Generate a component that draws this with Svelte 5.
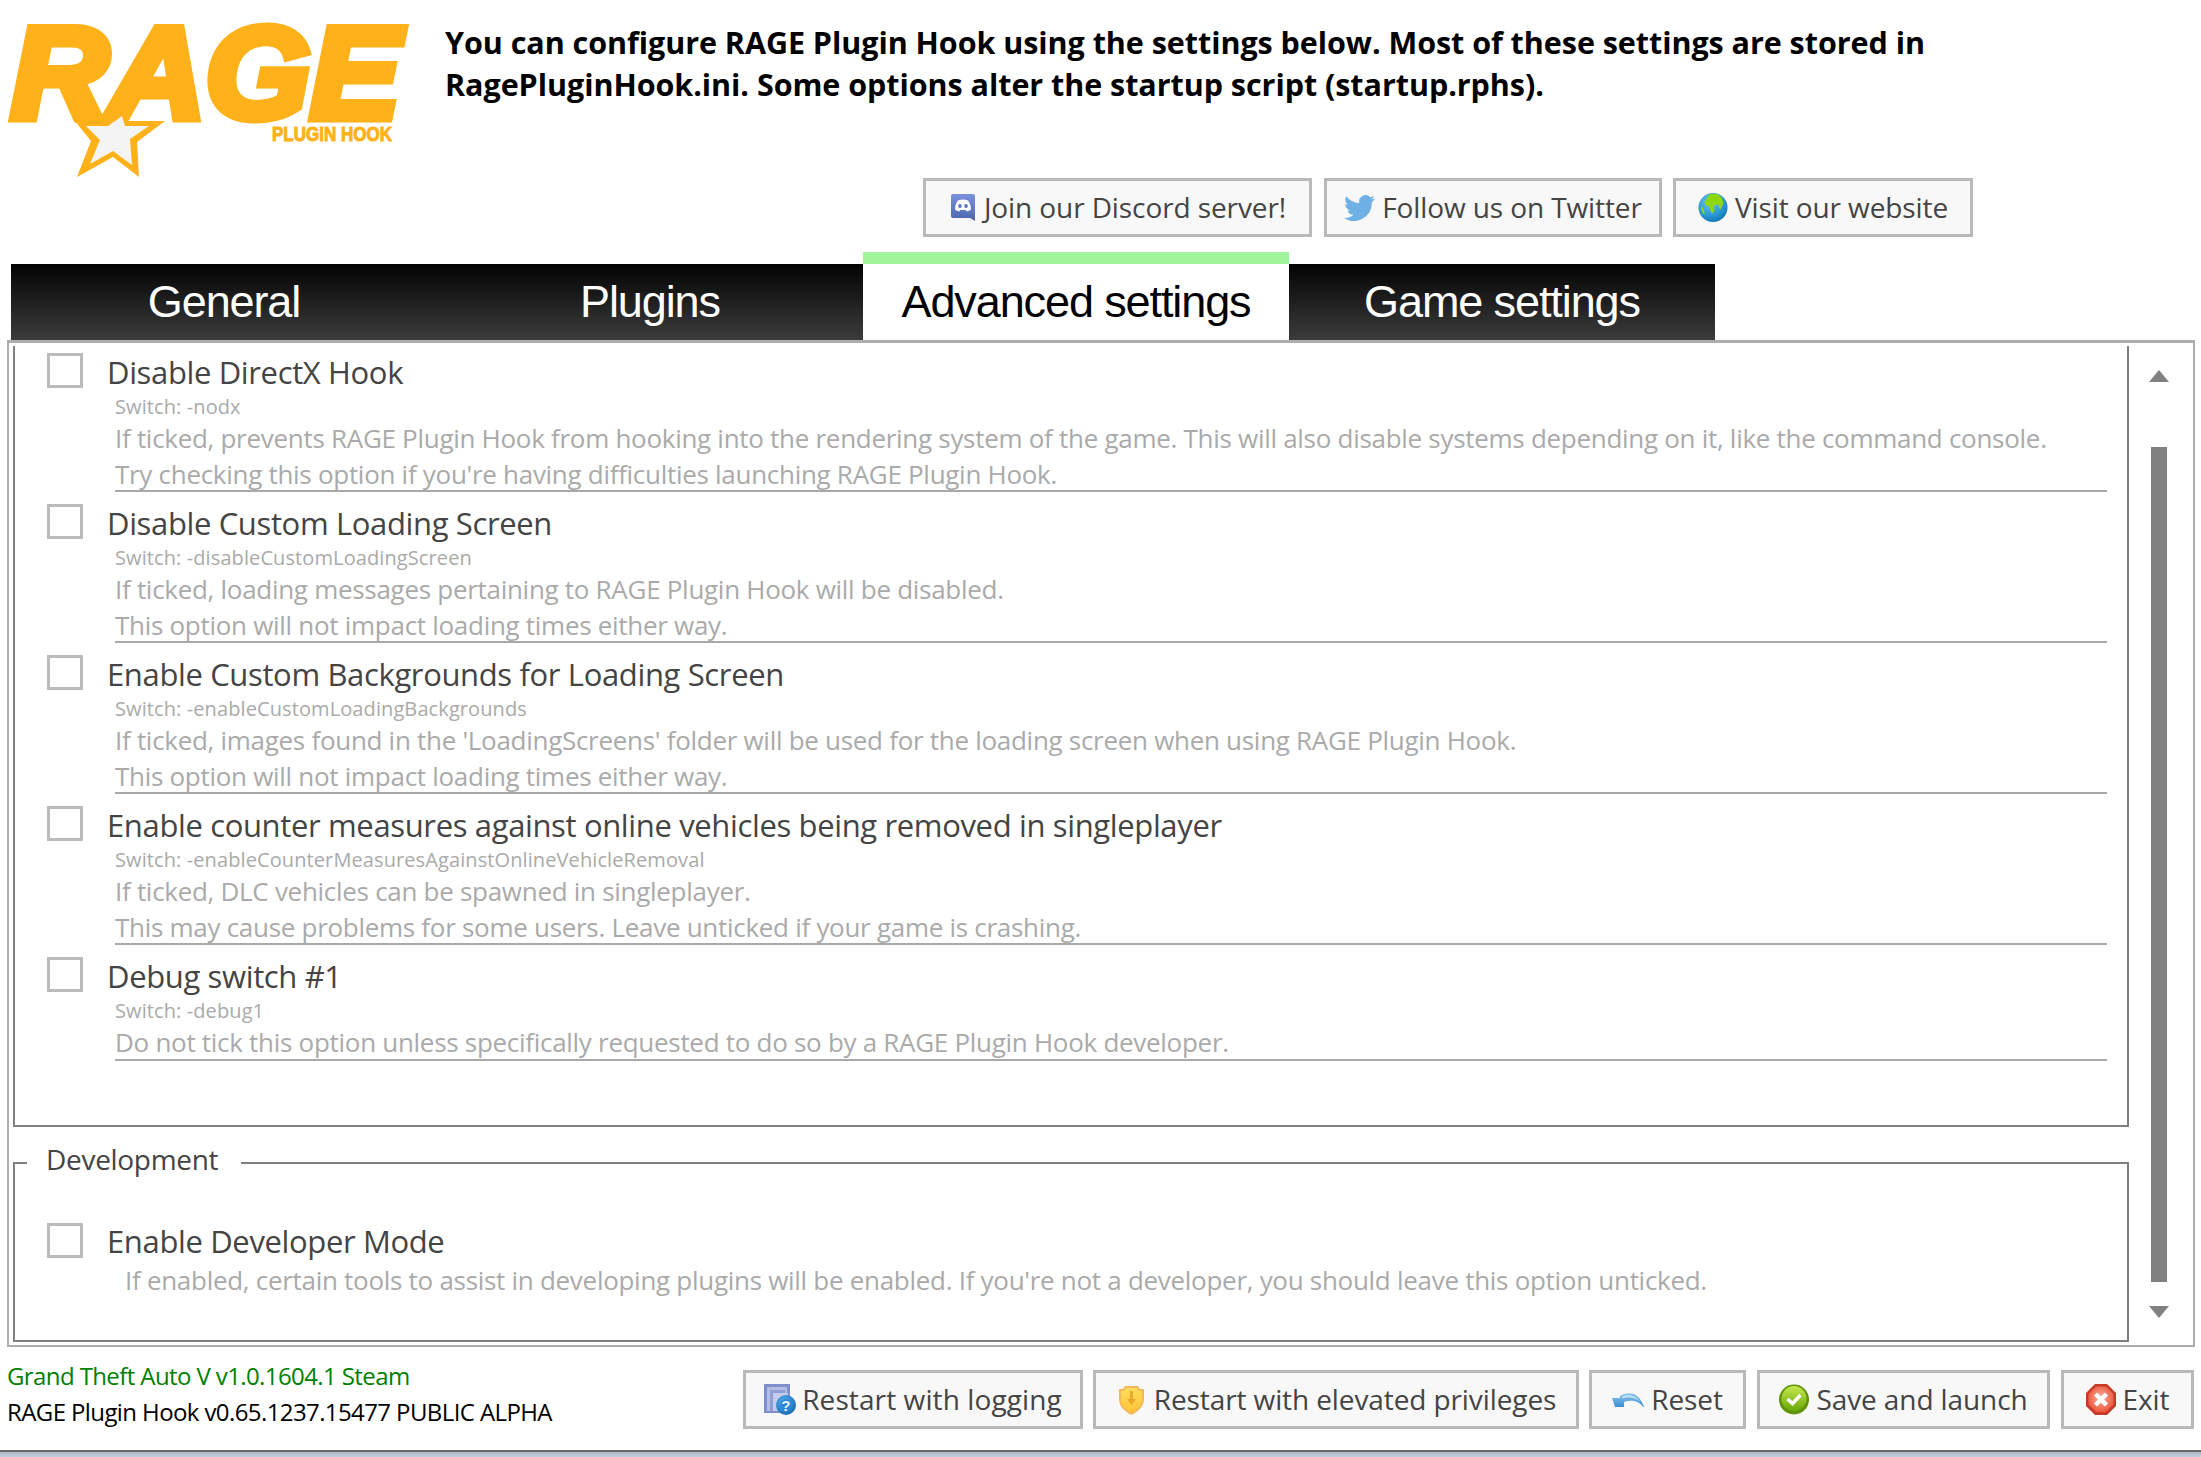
<script>
  const tabs = [
    { label: 'General' },
    { label: 'Plugins' },
    { label: 'Advanced settings', active: true },
    { label: 'Game settings' }
  ];

  const options = [
    {
      title: 'Disable DirectX Hook',
      sw: '-nodx',
      lines: [
        'If ticked, prevents RAGE Plugin Hook from hooking into the rendering system of the game. This will also disable systems depending on it, like the command console.',
        "Try checking this option if you're having difficulties launching RAGE Plugin Hook."
      ]
    },
    {
      title: 'Disable Custom Loading Screen',
      sw: '-disableCustomLoadingScreen',
      lines: [
        'If ticked, loading messages pertaining to RAGE Plugin Hook will be disabled.',
        'This option will not impact loading times either way.'
      ]
    },
    {
      title: 'Enable Custom Backgrounds for Loading Screen',
      sw: '-enableCustomLoadingBackgrounds',
      lines: [
        "If ticked, images found in the 'LoadingScreens' folder will be used for the loading screen when using RAGE Plugin Hook.",
        'This option will not impact loading times either way.'
      ]
    },
    {
      title: 'Enable counter measures against online vehicles being removed in singleplayer',
      sw: '-enableCounterMeasuresAgainstOnlineVehicleRemoval',
      lines: [
        'If ticked, DLC vehicles can be spawned in singleplayer.',
        'This may cause problems for some users. Leave unticked if your game is crashing.'
      ]
    },
    {
      title: 'Debug switch #1',
      sw: '-debug1',
      lines: ['Do not tick this option unless specifically requested to do so by a RAGE Plugin Hook developer.']
    }
  ];
</script>

<div class="window">
  <header class="top">
    <svg class="logo" viewBox="0 0 445 180" width="445" height="180" role="img" aria-label="RAGE Plugin Hook">
      <text x="11" y="118" class="rage" textLength="389" lengthAdjust="spacingAndGlyphs">RAGE</text>
      <polygon class="star-out" points="123,102 127,121 165,121 137,142 139,177 113,157 77,177 91,141 74,120 105,121" />
      <polygon class="star-in" points="122,116 125,126 149,126 130,139 132,165 113,151 90,164 100,140 86,126 108,126" />
      <text x="272" y="141" class="plugin" textLength="120" lengthAdjust="spacingAndGlyphs">PLUGIN HOOK</text>
    </svg>
    <div class="top-right">
      <p class="intro">You can configure RAGE Plugin Hook using the settings below. Most of these settings are stored in<br />RagePluginHook.ini. Some options alter the startup script (startup.rphs).</p>
      <div class="links">
        <button class="btn discord">
          <svg width="24" height="27" viewBox="0 0 24 27">
            <defs><linearGradient id="dc" x1="0" y1="0" x2="0" y2="1"><stop offset="0" stop-color="#7a90dc" /><stop offset="1" stop-color="#4c66ac" /></linearGradient></defs>
            <path fill="url(#dc)" d="M2 0h20a2 2 0 0 1 2 2v25l-5-3H2a2 2 0 0 1-2-2V2a2 2 0 0 1 2-2z" />
            <path fill="#fff" d="M7 6.500c3.300-1.200 6.700-1.200 10 0 1.800 1.900 2.900 5 3 9-1.200 1-2.700 1.700-4.200 2l-1-1.500H9.200l-1 1.500c-1.500-.3-3-1-4.200-2 .1-4 1.200-7.100 3-9z" />
            <ellipse cx="9" cy="12" rx="1.800" ry="2" fill="#5a72bc" />
            <ellipse cx="15" cy="12" rx="1.800" ry="2" fill="#5a72bc" />
          </svg>
          <span>Join our Discord server!</span>
        </button>
        <button class="btn twitter">
          <svg width="31" height="26" viewBox="0 0 24 20"><path fill="#6fb1e4" d="M24 2.400c-.9.400-1.800.7-2.800.8 1-.6 1.800-1.600 2.200-2.700-1 .6-2 1-3.100 1.200A4.900 4.900 0 0 0 11.900 6.200C7.800 6 4.200 4 1.700.9.400 3.100 1 6 3.200 7.500c-.8 0-1.600-.2-2.200-.6 0 2.300 1.600 4.400 3.900 4.900-.7.200-1.500.2-2.200.1.600 2 2.400 3.400 4.600 3.400A9.900 9.900 0 0 1 0 17.800 13.900 13.900 0 0 0 21.500 5.400c1-.7 1.800-1.600 2.500-3z" /></svg>
          <span>Follow us on Twitter</span>
        </button>
        <button class="btn web">
          <svg width="30" height="31" viewBox="0 0 30 31">
            <defs><radialGradient id="sea" cx=".4" cy=".3" r=".8"><stop offset="0" stop-color="#6cc8ee" /><stop offset=".6" stop-color="#2a96d4" /><stop offset="1" stop-color="#0a6ca8" /></radialGradient></defs>
            <circle cx="15" cy="15.500" r="14.500" fill="url(#sea)" />
            <path fill="#8cd80a" d="M11 2.500c3-1 7-1 10 .5l2.500 2.500 2 5.500-1.500 3.500-1.500 3-1.500-1.500-.5-3-3-.5-2 2.500 1 4-2.500 2.500-1.500-3-1-4-4-1.500-1-3 2.500-3.500z" />
            <path fill="#8cd80a" d="M3 15c1.500 0 3 1.500 3 3.500s1 3 .5 4.500C4.500 21.500 3 18 3 15z" />
          </svg>
          <span>Visit our website</span>
        </button>
      </div>
    </div>
  </header>

  <nav class="tabs">
    {#each tabs as tab}
      <div class="tab" class:active={tab.active}>{tab.label}</div>
    {/each}
  </nav>

  <section class="panel">
    <div class="panel-main">
      <div class="list">
        {#each options as opt}
          <div class="option">
            <span class="check"></span>
            <div class="option-text">
              <div class="title">{opt.title}</div>
              <div class="body">
                <div class="switch">Switch: {opt.sw}</div>
                {#each opt.lines as line}
                  <div class="desc">{line}</div>
                {/each}
              </div>
            </div>
          </div>
        {/each}
      </div>
      <fieldset class="group">
        <legend>Development</legend>
        <div class="dev">
          <span class="check"></span>
          <div class="title">Enable Developer Mode</div>
        </div>
        <div class="desc dev-desc">If enabled, certain tools to assist in developing plugins will be enabled. If you're not a developer, you should leave this option unticked.</div>
      </fieldset>
    </div>
    <div class="scrollbar">
      <span class="arrow up"></span>
      <span class="thumb"></span>
      <span class="arrow down"></span>
    </div>
  </section>

  <footer class="bottom">
    <div class="versions">
      <div class="gta">Grand Theft Auto V v1.0.1604.1 Steam</div>
      <div>RAGE Plugin Hook v0.65.1237.15477 PUBLIC ALPHA</div>
    </div>
    <div class="actions">
      <button class="btn logging">
        <svg width="32" height="31" viewBox="0 0 32 31">
          <defs><radialGradient id="qb" cx=".4" cy=".35" r=".7"><stop offset="0" stop-color="#5cb0ec" /><stop offset="1" stop-color="#1668b4" /></radialGradient></defs>
          <rect x="0" y="0" width="26" height="29" fill="#7f8fcb" />
          <rect x="3" y="3" width="20" height="24" fill="#b4bde6" />
          <rect x="6" y="6" width="15" height="21" fill="#8f9fd6" />
          <rect x="9" y="9" width="15" height="18" fill="#c4cbee" />
          <circle cx="22" cy="21" r="10" fill="url(#qb)" />
          <circle cx="22" cy="21" r="6" fill="#2c88d8" />
          <text x="22" y="26.500" class="q">?</text>
        </svg>
        <span>Restart with logging</span>
      </button>
      <button class="btn elevated">
        <svg width="25" height="31" viewBox="0 0 25 31">
          <defs><linearGradient id="sh" x1="0" y1="0" x2="0" y2="1"><stop offset="0" stop-color="#ffdc5c" /><stop offset="1" stop-color="#ffc438" /></linearGradient></defs>
          <path fill="#f3b85a" d="M6 2h13l2 3h4v10c0 7-5 12-12.500 16C5 27 0 22 0 15V5h4z" />
          <path fill="url(#sh)" d="M7 4h11l2 3h3v8c0 6-4 10-10.500 13.500C6 25 2 21 2 15V7h3z" />
          <path fill="#e8a828" d="M11 7h3v8h3l-4.500 6L8 15h3z" />
        </svg>
        <span>Restart with elevated privileges</span>
      </button>
      <button class="btn reset">
        <svg width="32" height="17" viewBox="0 0 32 17">
          <defs><linearGradient id="rs" x1="0" y1="0" x2="0" y2="1"><stop offset="0" stop-color="#8cc4ee" /><stop offset="1" stop-color="#3d8fd0" /></linearGradient></defs>
          <path fill="url(#rs)" d="M0 7h8V5c9-5 19-4 24 11h-1C26 9 18 9 12 11v5H3z" />
          <path fill="#b8def8" d="M10 5.500c6-3 13-2 18 5-5-4-11-5-18-3z" />
        </svg>
        <span>Reset</span>
      </button>
      <button class="btn save">
        <svg width="30" height="31" viewBox="0 0 30 31">
          <defs><linearGradient id="ok" x1="0" y1="0" x2="0" y2="1"><stop offset="0" stop-color="#c4e850" /><stop offset="1" stop-color="#6aa808" /></linearGradient></defs>
          <circle cx="15" cy="15.500" r="15" fill="#5f9408" />
          <circle cx="15" cy="14.500" r="12.500" fill="url(#ok)" />
          <path d="M8.500 15l5 4.500 8-8.500" fill="none" stroke="#fff" stroke-width="3.500" />
        </svg>
        <span>Save and launch</span>
      </button>
      <button class="btn exit">
        <svg width="30" height="31" viewBox="0 0 30 31">
          <defs><radialGradient id="ex" cx=".5" cy=".45" r=".55"><stop offset="0" stop-color="#f8b098" /><stop offset="1" stop-color="#ec5a40" /></radialGradient></defs>
          <polygon fill="#c83a28" points="9,0 21,0 30,9 30,22 21,31 9,31 0,22 0,9" />
          <polygon fill="url(#ex)" points="10,2.500 20,2.500 27.500,10 27.500,20.500 20,28 10,28 2.500,20.500 2.500,10" />
          <path d="M9.500 10l11 11M20.500 10l-11 11" stroke="#fff" stroke-width="4.500" />
        </svg>
        <span>Exit</span>
      </button>
    </div>
  </footer>
  <div class="edge"></div>
</div>

<style>
  :global(body) { background: #fff; }
  .window { display: flex; flex-direction: column; width: 2201px; height: 1457px; overflow: hidden; font-family: "Open Sans", "Noto Sans", sans-serif; color: #444; }

  .top { display: flex; height: 252px; }
  .logo { flex: none; width: 445px; }
  .rage { font-family: "Liberation Sans", sans-serif; font-size: 130px; font-weight: 700; font-style: italic; fill: #ffb119; stroke: #ffb119; stroke-width: 9px; }
  .plugin { font-family: "Liberation Sans", sans-serif; font-size: 20px; font-weight: 700; fill: #ffb119; stroke: #ffb119; stroke-width: 1px; }
  .star-out { fill: #ffb119; }
  .star-in { fill: #f4f4f4; }
  .top-right { flex: 1; display: flex; flex-direction: column; }
  .intro { margin: 21px 0 0; font-size: 30.5px; font-weight: 700; line-height: 42px; color: #000; letter-spacing: -.05px; }
  .links { display: flex; gap: 11px; margin: 73px 0 0 478px; }

  .btn { display: flex; align-items: center; justify-content: center; gap: 7px; height: 59px; padding: 0; border: 3px solid #b9b9b9; background: #f8f8f8; color: #444; font: inherit; font-size: 28px; white-space: nowrap; letter-spacing: -.1px; }
  .btn span { display: block; margin-top: -1px; }
  .discord { width: 389px; padding-left: 2px; gap: 9px; }
  .twitter { width: 338px; margin-left: 1px; }
  .web { width: 300px; }
  .logging { width: 340px; gap: 6px; letter-spacing: .1px; }
  .elevated { width: 486px; padding-left: 3px; gap: 10px; }
  .reset { width: 157px; }
  .save { width: 293px; margin-left: 1px; }
  .exit { width: 133px; margin-left: 1px; }

  .tabs { display: flex; padding-left: 11px; height: 88px; }
  .tab { width: 426px; margin-top: 12px; display: flex; align-items: center; justify-content: center; background: linear-gradient(#030303, #3c3c3c); color: #fff; font-family: "Liberation Sans", sans-serif; font-size: 45px; letter-spacing: -1.1px; }
  .tab.active { margin-top: 0; border-top: 12px solid #a0f49a; background: #fff; color: #000; }

  .panel { display: flex; height: 1007px; margin: 0 6px 0 7px; border: 2px solid #adadad; border-top-width: 3px; box-sizing: border-box; }
  .panel-main { width: 2116px; margin-left: 4px; padding-top: 3px; flex: none; box-sizing: border-box; }
  .list { height: 781px; box-sizing: border-box; border: 2px solid #808080; border-top: 0; }
  .option { display: flex; height: 151px; padding: 8px 0 0 32px; box-sizing: border-box; }
  .check { flex: none; display: block; width: 36px; height: 35px; box-sizing: border-box; border: 3px solid #bbb; background: #fff; margin-top: -1px; }
  .option-text { flex: 1; margin-left: 24px; }
  .title { font-size: 31px; line-height: 36px; color: #444; letter-spacing: -.36px; white-space: nowrap; }
  .body { margin: 0 20px 0 8px; border-bottom: 2px solid #a9a9a9; height: 102px; box-sizing: border-box; }
  .option:last-child .body { height: 67px; }
  .switch { padding-top: 3px; margin-bottom: -1px; font-size: 20px; line-height: 28px; color: #aaa; letter-spacing: .1px; }
  .desc { font-size: 26px; line-height: 36px; color: #aaa; letter-spacing: -.29px; white-space: nowrap; }

  .group { margin: 18px 0 0; padding: 0; height: 197px; box-sizing: border-box; border: 2px solid #808080; min-width: 0; }
  legend { margin-left: 12px; padding: 0 23px 8px 19px; font-size: 28px; line-height: 28px; letter-spacing: -.3px; color: #444; }
  .dev { display: flex; padding: 42px 0 0 32px; align-items: center; gap: 24px; }
  .dev-desc { margin: 3px 0 0 110px; }

  .scrollbar { flex: 1; position: relative; display: flex; flex-direction: column; align-items: center; padding: 27px 4px 27px 0; }
  .arrow { flex: none; width: 0; height: 0; border-left: 10px solid transparent; border-right: 10px solid transparent; }
  .up { border-bottom: 12px solid #808080; }
  .down { border-top: 12px solid #808080; }
  .thumb { flex: none; width: 16px; height: 835px; margin: 65px 0 24px; background: #808080; }

  .bottom { display: flex; justify-content: space-between; height: 103px; padding: 0 7px; box-sizing: border-box; }
  .versions { padding-top: 11px; font-size: 24px; line-height: 36px; color: #000; letter-spacing: -.6px; white-space: nowrap; }
  .gta { color: #008000; }
  .actions { display: flex; gap: 10px; padding-top: 23px; }

  .edge { flex: 1; border-top: 2px solid #666; background: linear-gradient(#a9b6c6, #c3cedb); }

  .q { font-family: "Liberation Sans", sans-serif; font-size: 15px; font-weight: 700; text-anchor: middle; fill: #e8f4ff; }
</style>
